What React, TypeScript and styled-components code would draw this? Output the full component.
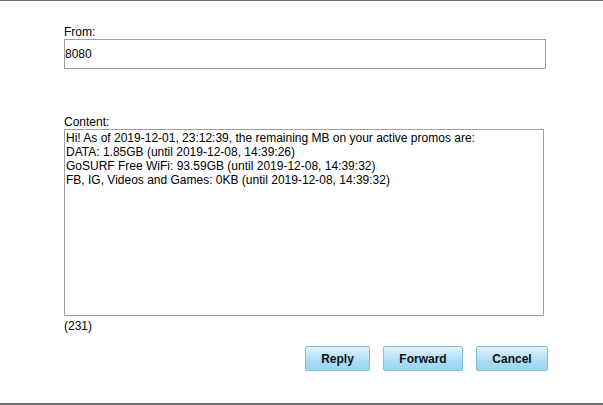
import styled, { createGlobalStyle } from 'styled-components'

const GlobalStyle = createGlobalStyle`
  html, body {
    margin: 0;
    padding: 0;
    background: #fff;
  }
  body {
    font-family: "Liberation Sans", Arial, sans-serif;
    font-size: 12px;
    color: #000;
  }
`;

const Frame = styled.div`
  width: 603px;
  height: 405px;
  box-sizing: border-box;
  border-top: 1px solid #6f6f6f;
  border-bottom: 2px solid #6f6f6f;
  padding: 24px 0 0 64px;
  display: flex;
  flex-direction: column;
`;

const Label = styled.div`
  line-height: 14px;
  height: 14px;
`;

const FromBox = styled.div`
  width: 482px;
  height: 30px;
  box-sizing: border-box;
  border: 1px solid #a0a0a0;
  display: flex;
  align-items: center;
  margin-bottom: 46px;
`;

const ContentBox = styled.div`
  width: 480px;
  height: 187px;
  box-sizing: border-box;
  border: 1px solid #a0a0a0;
  padding: 1px 0 0 1px;
  line-height: 14px;
  white-space: pre;
`;

const Counter = styled.div`
  margin-top: 3px;
  line-height: 14px;
`;

const Actions = styled.div`
  display: flex;
  gap: 13px;
  margin-top: 13px;
  padding-left: 241px;
`;

const Button = styled.button<{ w: number }>`
  width: ${(p) => p.w}px;
  height: 25px;
  box-sizing: border-box;
  border: 1px solid #80bfe0;
  border-radius: 2px;
  background: linear-gradient(#e2f3fb 0%, #c8e8f8 30%, #a9dcf4 60%, #9bd6f3 100%);
  font-family: "Liberation Sans", Arial, sans-serif;
  font-size: 12px;
  font-weight: bold;
  color: #111;
  padding: 0;
  cursor: pointer;
`;

const lines = [
  'Hi! As of 2019-12-01, 23:12:39, the remaining MB on your active promos are:',
  'DATA: 1.85GB (until 2019-12-08, 14:39:26)',
  'GoSURF Free WiFi: 93.59GB (until 2019-12-08, 14:39:32)',
  'FB, IG, Videos and Games: 0KB (until 2019-12-08, 14:39:32)',
];

export default function App() {
  return (
    <>
      <GlobalStyle />
      <Frame>
        <Label>From:</Label>
        <FromBox>8080</FromBox>
        <Label>Content:</Label>
        <ContentBox>{lines.join('\n')}</ContentBox>
        <Counter>(231)</Counter>
        <Actions>
          <Button w={65}>Reply</Button>
          <Button w={80}>Forward</Button>
          <Button w={72}>Cancel</Button>
        </Actions>
      </Frame>
    </>
  )
}
